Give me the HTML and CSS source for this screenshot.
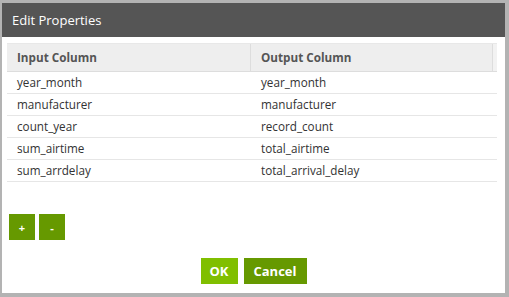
FILE: index.html
```html
<!DOCTYPE html>
<html>
<head>
  <title>Edit Properties</title>
  <link rel="stylesheet" href="styles.css">
</head>
<body>
  <div class="dialog">
    <div class="dialog-title">Edit Properties</div>
    <div class="dialog-body">
      <div class="grid">
        <div class="grid-head">
          <div class="cell">Input Column</div>
          <div class="cell">Output Column</div>
          <div class="gutter"></div>
        </div>
        <div class="grid-row">
          <div class="cell">year_month</div>
          <div class="cell">year_month</div>
        </div>
        <div class="grid-row">
          <div class="cell">manufacturer</div>
          <div class="cell">manufacturer</div>
        </div>
        <div class="grid-row">
          <div class="cell">count_year</div>
          <div class="cell">record_count</div>
        </div>
        <div class="grid-row">
          <div class="cell">sum_airtime</div>
          <div class="cell">total_airtime</div>
        </div>
        <div class="grid-row">
          <div class="cell">sum_arrdelay</div>
          <div class="cell">total_arrival_delay</div>
        </div>
      </div>

      <div class="row-tools">
        <button class="btn btn-small">+</button>
        <button class="btn btn-small">-</button>
      </div>

      <div class="dialog-actions">
        <button class="btn btn-ok">OK</button>
        <button class="btn btn-cancel">Cancel</button>
      </div>
    </div>
  </div>
</body>
</html>
```

FILE: styles.css
```css
/* Dialog */
body {
  margin: 0;
  background-color: #b3b3b3;
  font-family: "Open Sans", "DejaVu Sans", sans-serif;
  color: #333;
}

.dialog {
  margin: 3px 4px 0 2px;
  height: 290px;
  background-color: #fff;
  display: flex;
  flex-direction: column;
}

.dialog-title {
  background-color: #555;
  color: #fff;
  height: 34px;
  line-height: 34px;
  padding-left: 10px;
  font-size: 13px;
}

.dialog-body {
  flex: 1;
  padding: 6px 5px 0 5px;
  display: flex;
  flex-direction: column;
}

.grid {
  width: 490px;
  height: 162px;
}

.grid-head {
  display: grid;
  grid-template-columns: 244px 242px 4px;
  height: 27px;
  background-color: #eee;
  border-top: 1px solid #e8e8e8;
  border-bottom: 1px solid #ddd;
  font-weight: bold;
  color: #555;
}

.grid-head .cell {
  line-height: 27px;
  border-right: 1px solid #ddd;
}

.gutter {
  background-color: #f2f2f2;
}

.grid-row {
  display: grid;
  grid-template-columns: 244px 246px;
  height: 21px;
  border-bottom: 1px solid #e6e6e6;
}

.cell {
  padding-left: 10px;
  font-size: 11.7px;
  line-height: 21px;
  white-space: nowrap;
}

.row-tools {
  display: flex;
  gap: 4px;
  padding-left: 2px;
  margin-top: 9px;
}

.btn {
  border: none;
  color: #fff;
  font-family: "Open Sans", "DejaVu Sans", sans-serif;
  font-weight: bold;
  cursor: pointer;
  padding: 0;
}

.btn-small {
  width: 26px;
  height: 26px;
  background-color: #669900;
  font-size: 11px;
}

.dialog-actions {
  display: flex;
  justify-content: center;
  gap: 6px;
  margin-top: 18px;
}

.btn-ok,
.btn-cancel {
  height: 26px;
  font-size: 13px;
}

.btn-ok {
  width: 37px;
  background-color: #80bf00;
}

.btn-cancel {
  width: 63px;
  background-color: #669900;
}
```
